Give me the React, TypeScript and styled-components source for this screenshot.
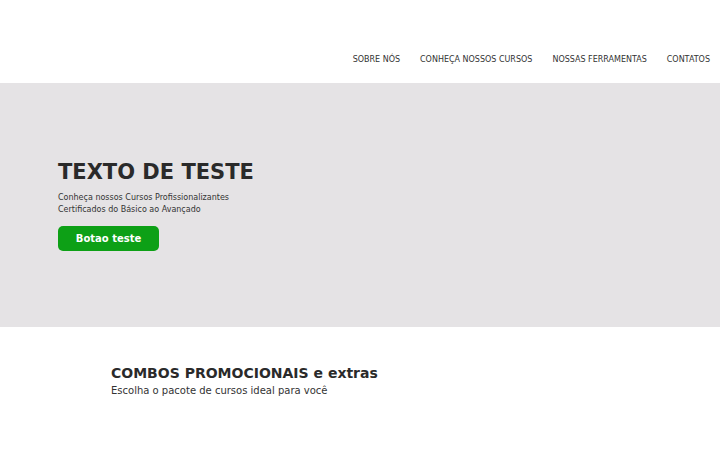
import styled, { createGlobalStyle } from "styled-components"

const Global = createGlobalStyle`
  body {
    margin: 0;
    background: #fff;
    font-family: "DejaVu Sans", sans-serif;
    color: #2b2b2b;
  }
`

const Header = styled.header`
  height: 83px;
  display: flex;
  align-items: flex-end;
  justify-content: flex-end;
  padding: 0 10px 19px 0;
  box-sizing: border-box;
`

const Nav = styled.nav`
  display: flex;
  gap: 20px;
`

const NavLink = styled.a`
  font-size: 8px;
  color: #333;
  text-decoration: none;
  text-transform: uppercase;
`

const Hero = styled.section`
  height: 244px;
  background: #e5e3e5;
  display: flex;
  flex-direction: column;
  justify-content: center;
  padding-left: 58px;
`

const Title = styled.h1`
  margin: 0 0 8px;
  font-size: 21px;
  font-weight: bold;
  color: #2a2a2a;
`

const Lead = styled.p`
  margin: 0 0 10px;
  font-size: 8px;
  line-height: 12px;
  color: #333;
`

const Button = styled.button`
  width: 101px;
  height: 25px;
  border: none;
  border-radius: 5px;
  background: #0da016;
  color: #fff;
  font-family: inherit;
  font-size: 10px;
  font-weight: bold;
  cursor: pointer;
`

const Combos = styled.section`
  padding: 38px 0 0 111px;
`

const ComboTitle = styled.h2`
  margin: 0 0 4px;
  font-size: 14px;
  font-weight: bold;
  color: #2a2a2a;
`

const ComboText = styled.p`
  margin: 0;
  font-size: 10px;
  color: #333;
`

const links = ["Sobre nós", "Conheça nossos cursos", "Nossas ferramentas", "Contatos"]

export default function App() {
  return (
    <>
      <Global />
      <Header>
        <Nav>
          {links.map(l => (
            <NavLink key={l} href="#">
              {l}
            </NavLink>
          ))}
        </Nav>
      </Header>
      <Hero>
        <Title>TEXTO DE TESTE</Title>
        <Lead>
          Conheça nossos Cursos Profissionalizantes
          <br />
          Certificados do Básico ao Avançado
        </Lead>
        <div>
          <Button>Botao teste</Button>
        </div>
      </Hero>
      <Combos>
        <ComboTitle>COMBOS PROMOCIONAIS e extras</ComboTitle>
        <ComboText>Escolha o pacote de cursos ideal para você</ComboText>
      </Combos>
    </>
  )
}
